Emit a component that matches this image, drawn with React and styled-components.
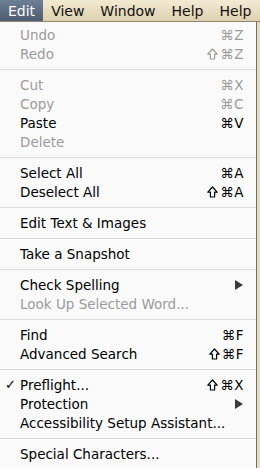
import React from 'react';
import styled, { createGlobalStyle } from 'styled-components';

const Global = createGlobalStyle`
  html, body {
    margin: 0;
    padding: 0;
    background: #e6dcc4;
  }
  body {
    font-family: "DejaVu Sans", "Lucida Grande", sans-serif;
    width: 260px;
    height: 468px;
    overflow: hidden;
  }
`;

const Screen = styled.div`
  width: 260px;
  height: 468px;
  display: flex;
  flex-direction: column;
`;

const MenuBar = styled.div`
  height: 22px;
  display: flex;
  align-items: stretch;
  background: linear-gradient(#f3ead3, #ddd0af);
  border-bottom: 1px solid #8c8570;
  box-sizing: border-box;
  overflow: hidden;
`;

const BarItem = styled.div`
  display: flex;
  align-items: center;
  flex-shrink: 0;
  padding: 0 ${p => p.$pad || 8}px;
  font-size: 14px;
  color: ${p => (p.$active ? '#fff' : '#111')};
  background: ${p => (p.$active ? 'linear-gradient(#6f7f95, #4d5b70)' : 'transparent')};
`;

const MenuWrap = styled.div`
  flex: 1;
  display: flex;
`;

const Menu = styled.div`
  width: 257px;
  background: #fafafa;
  border-right: 1px solid #6f6f6f;
  padding: 3px 0 5px;
  box-sizing: border-box;
  display: flex;
  flex-direction: column;
`;

const Item = styled.div`
  height: 19px;
  display: flex;
  align-items: center;
  position: relative;
  padding: 0 12px 0 20px;
  font-size: 13.5px;
  color: ${p => (p.$disabled ? '#9a9a9a' : '#000')};
`;

const Label = styled.span`
  flex: 1;
  white-space: nowrap;
`;

const Shortcut = styled.span`
  display: flex;
  align-items: center;
  gap: 1px;
  font-size: 13.5px;
  letter-spacing: 0.5px;
`;

const ShiftIcon = styled.svg`
  width: 11px;
  height: 12px;
  margin-right: 1px;
`;

const Check = styled.span`
  position: absolute;
  left: 5px;
  font-size: 13px;
`;

const Arrow = styled.span`
  width: 0;
  height: 0;
  border-top: 5px solid transparent;
  border-bottom: 5px solid transparent;
  border-left: 8px solid #3a3a3a;
  margin-right: 1px;
`;

const Separator = styled.div`
  height: 12px;
  display: flex;
  align-items: center;
  &::after {
    content: '';
    flex: 1;
    height: 1px;
    background: #dcdcdc;
  }
`;

const Shift = () => (
  <ShiftIcon viewBox="0 0 11 12">
    <path
      d="M5.5 1 L10.2 6.2 L7.6 6.2 L7.6 11 L3.4 11 L3.4 6.2 L0.8 6.2 Z"
      fill="none"
      stroke="currentColor"
      strokeWidth="1.2"
      strokeLinejoin="round"
    />
  </ShiftIcon>
);

const groups = [
  [
    { label: 'Undo', key: 'Z', disabled: true },
    { label: 'Redo', key: 'Z', shift: true, disabled: true },
  ],
  [
    { label: 'Cut', key: 'X', disabled: true },
    { label: 'Copy', key: 'C', disabled: true },
    { label: 'Paste', key: 'V' },
    { label: 'Delete', disabled: true },
  ],
  [
    { label: 'Select All', key: 'A' },
    { label: 'Deselect All', key: 'A', shift: true },
  ],
  [{ label: 'Edit Text & Images' }],
  [{ label: 'Take a Snapshot' }],
  [
    { label: 'Check Spelling', sub: true },
    { label: 'Look Up Selected Word...', disabled: true },
  ],
  [
    { label: 'Find', key: 'F' },
    { label: 'Advanced Search', key: 'F', shift: true },
  ],
  [
    { label: 'Preflight...', key: 'X', shift: true, checked: true },
    { label: 'Protection', sub: true },
    { label: 'Accessibility Setup Assistant...' },
  ],
  [{ label: 'Special Characters...' }],
];

const App = () => (
  <Screen>
    <Global />
    <MenuBar>
      <BarItem $active>Edit</BarItem>
      <BarItem>View</BarItem>
      <BarItem>Window</BarItem>
      <BarItem>Help</BarItem>
      <BarItem>Help</BarItem>
    </MenuBar>
    <MenuWrap>
      <Menu>
        {groups.map((g, i) => (
          <React.Fragment key={i}>
            {i > 0 && <Separator />}
            {g.map(it => (
              <Item key={it.label} $disabled={it.disabled}>
                {it.checked && <Check>✓</Check>}
                <Label>{it.label}</Label>
                {it.key && (
                  <Shortcut>
                    {it.shift && <Shift />}
                    <span>⌘{it.key}</span>
                  </Shortcut>
                )}
                {it.sub && <Arrow />}
              </Item>
            ))}
          </React.Fragment>
        ))}
      </Menu>
    </MenuWrap>
  </Screen>
);

export default App;
